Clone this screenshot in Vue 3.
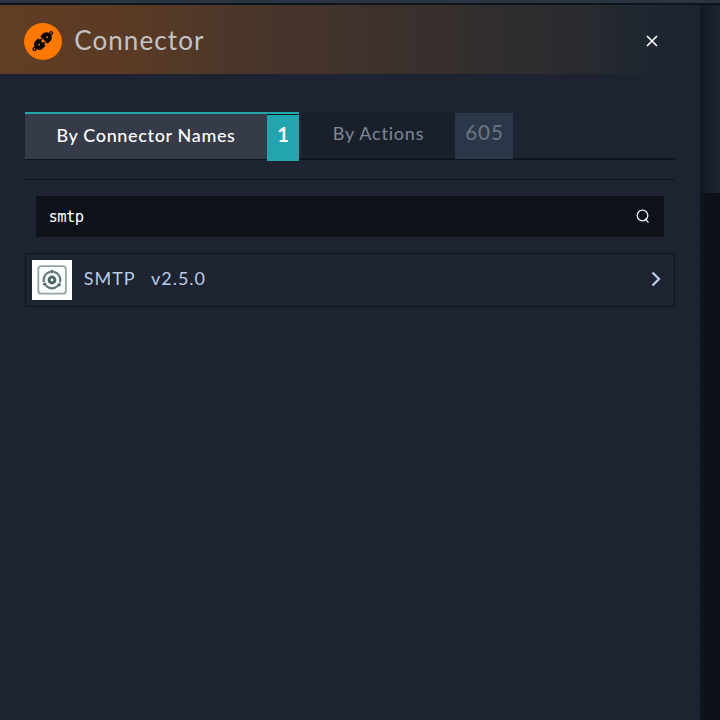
<script setup>
import { ref } from 'vue'

const query = ref('smtp')
const dots = Array.from({ length: 26 }, (_, i) => i)
</script>

<template>
  <div class="screen">
    <div class="topbar"></div>
    <div class="body">
      <section class="panel">
        <header class="header">
          <svg class="logo" viewBox="0 0 38 38">
            <ellipse cx="19" cy="18.5" rx="19" ry="18.5" fill="#ff7800" />
            <g transform="translate(18.8 18.1) rotate(-44)">
              <path d="M-1.2 -5.2H-5.5Q-10 -4.5 -10.3 0Q-10 4.5 -5.5 5.2H-1.2V3.2H.8V1.4H-1.2V-1.4H.8V-3.2H-1.2Z" fill="#090500" />
              <path d="M1.6 -5.2H6Q10 -4.5 10.3 0Q10 4.5 6 5.2H1.6Z" fill="#090500" />
              <circle cx="-11.4" cy="0" r="1.5" fill="#ff7800" stroke="#090500" stroke-width="1.3" />
              <circle cx="11.4" cy="0" r="1.5" fill="#ff7800" stroke="#090500" stroke-width="1.3" />
              <circle cx="-5.2" cy="0" r="0.9" fill="#ff7800" />
              <circle cx="5.8" cy="0" r="0.9" fill="#ff7800" />
            </g>
          </svg>
          <h1>Connector</h1>
          <svg class="close" viewBox="0 0 12 12"><path d="M1 1L11 11M11 1L1 11" /></svg>
        </header>

        <main class="content">
          <nav class="tabs">
            <div class="tab active">
              <span class="label">By Connector Names</span>
              <span class="count">1</span>
            </div>
            <div class="tab idle">
              <span class="label">By Actions</span>
              <span class="count">605</span>
            </div>
          </nav>
          <div class="divider"></div>
          <div class="search">
            <span class="query">{{ query }}</span>
            <svg viewBox="0 0 14 15"><circle cx="6.5" cy="6.5" r="5.3" /><path d="M9 9.8L12.5 13.6" /></svg>
          </div>
          <div class="result">
            <svg class="thumb" viewBox="0 0 40 40">
              <rect width="40" height="40" fill="#fff" />
              <rect x="6.3" y="6.1" width="27.6" height="27.6" rx="3" fill="#fbfcfc" stroke="#95a5a3" stroke-width="1.8" />
              <g fill="none" stroke="#62777a">
                <circle cx="20" cy="20" r="8.3" stroke-width="2.2" stroke-dasharray="13.4 3.98" stroke-dashoffset="-2" transform="rotate(-90 20 20)" />
                <circle cx="20" cy="20" r="2.9" stroke="#4e6468" stroke-width="3" />
              </g>
              <g fill="#4e6468">
                <circle cx="20" cy="11.5" r="1.7" />
                <circle cx="27.1" cy="24.7" r="1.7" />
                <circle cx="12.7" cy="24.1" r="1.7" />
              </g>
            </svg>
            <span class="name">SMTP</span>
            <span class="version">v2.5.0</span>
            <svg class="chevron" viewBox="0 0 10 16"><path d="M1.5 1.5L8 8L1.5 14.5" /></svg>
          </div>
        </main>
      </section>
      <aside class="canvas">
        <div class="shade"></div>
        <div class="dots"><i v-for="d in dots" :key="d"></i></div>
      </aside>
    </div>
  </div>
</template>

<style>
body { margin: 0; background: #1d2330; }
</style>

<style scoped>
.screen { width: 720px; height: 720px; overflow: hidden; display: flex; flex-direction: column; font-family: Lato, sans-serif; background: #1d2330; }
.topbar { height: 3px; flex: none; background: #2a3541; border-bottom: 2px solid #0e141b; }
.body { flex: 1; display: flex; min-height: 0; }
.panel { width: 700px; flex: none; }
.header { box-sizing: border-box; height: 69px; padding: 0 42px 0 24px; display: flex; align-items: center; background: linear-gradient(90deg, #613d23 0%, #593a25 20%, #4b362a 34%, #39302d 60%, #272a30 85%, #1e2630 93%, #1d2330 100%); }
.logo { width: 38px; height: 38px; margin-top: 5px; }
h1 { margin: 0 0 0 12.2px; font-size: 26px; line-height: 32px; font-weight: 400; letter-spacing: 1.1px; color: #c3c4c7; }
.close { width: 12px; height: 12px; margin: 2px 0 0 auto; fill: none; stroke: #fff; stroke-width: 1.6; }
.content { padding: 38px 25px 0; }
.tabs { height: 49px; display: flex; align-items: flex-start; background: linear-gradient(#0e141b, #0e141b) 0 46px / 100% 2px no-repeat; }
.tab { display: flex; box-sizing: border-box; }
.active { width: 274px; height: 48px; border-top: 2px solid #22a5af; border-bottom: 1px solid #0e141b; background: #353b48; color: #fff; }
.active .label { width: 242px; text-align: center; font-size: 18px; font-weight: 500; line-height: 43px; letter-spacing: .65px; }
.active .count { width: 32px; height: 46px; margin-top: 1px; background: #22a5af; text-align: center; font-size: 20px; font-weight: 700; line-height: 39px; box-shadow: 0 -1px #0e141b; }
.idle { margin-left: 3px; height: 47px; }
.idle .label { width: 153px; height: 45px; background: #19202a; color: #7d8899; text-align: center; font-size: 18px; line-height: 43px; letter-spacing: .8px; }
.idle .count { width: 58px; height: 46px; margin-top: 1px; background: #2a3748; color: #6c7582; text-align: center; font-size: 20.5px; line-height: 39px; letter-spacing: 1px; text-indent: 1px; }
.divider { height: 1px; margin-top: 18px; background: #0e141b; }
.search { margin: 16px 11px 0; height: 41px; padding: 0 14px 0 12.5px; display: flex; align-items: center; justify-content: space-between; background: #0d1218; color: #fff; }
.query { font-family: "DejaVu Sans Mono", monospace; font-size: 15.5px; line-height: 20px; letter-spacing: -.55px; }
.search svg { width: 14px; height: 15px; fill: none; stroke: #eef1f5; stroke-width: 1.3; }
.result { box-sizing: border-box; height: 54px; margin-top: 16px; padding: 0 13.5px 0 6px; border: 1px solid #0e141b; display: flex; align-items: center; color: #b9cbe5; font-size: 18px; letter-spacing: 1px; line-height: 24px; }
.thumb { width: 40px; height: 40px; }
.name { margin: -4px 0 0 11.7px; }
.version { margin: -4px 0 0 15.3px; }
.chevron { width: 10px; height: 16px; margin: -3px 0 0 auto; fill: none; stroke: #b9cbe5; stroke-width: 2.3; }
.canvas { width: 20px; background: linear-gradient(90deg, #10161e 0 3px, #0c1218 3px, #0b1117); }
.shade { height: 188px; background: linear-gradient(90deg, #111820, #17202a 50%, #1c2631); }
.dots { display: flex; flex-direction: column; gap: 19.4px; padding: 7px 0 0 3px; }
.dots i { width: 1px; height: 1px; flex: none; background: #1b2430; }
</style>
